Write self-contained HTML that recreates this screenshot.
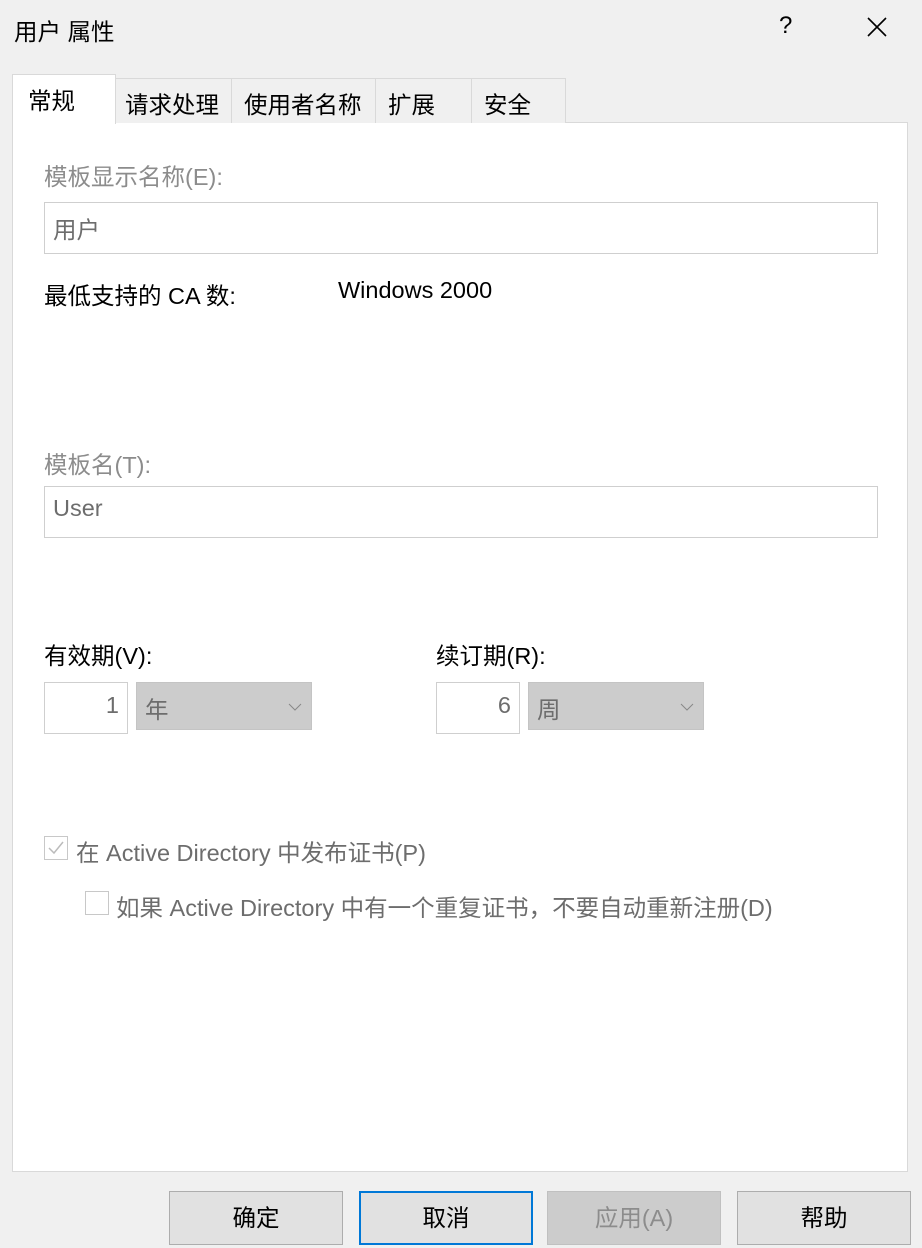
<!DOCTYPE html>
<html><head><meta charset="utf-8"><style>
*{margin:0;padding:0;box-sizing:border-box}
body{width:922px;height:1248px;background:#f0f0f0;font-family:"Liberation Sans","Noto Sans CJK SC",sans-serif;font-size:23.5px;color:#000;position:relative;overflow:hidden}
.a{position:absolute;white-space:nowrap}
.tab{position:absolute;top:78px;height:45px;border:1px solid #d9d9d9;border-bottom:none;background:#f0f0f0;padding:7px 0 0 9px}
.field{position:absolute;background:#fff;border:1px solid #cfcfcf;color:#6d6d6d;padding:6px 8px}
.combo{position:absolute;background:#cccccc;border:1px solid #c4c4c4;color:#6d6d6d;padding:8px 8px}
.gray{color:#8c8c8c}
.btn{position:absolute;top:1191px;width:174px;height:54px;background:#e1e1e1;border:1px solid #adadad;text-align:center;line-height:52px}
.chk{position:absolute;width:24px;height:24px;border:1px solid #c8c8c8;background:#fff}
</style></head><body>
<div class="a" style="left:14px;top:13px">用户 属性</div>
<div class="a" style="left:779px;top:12px;font-size:24px">?</div>
<svg class="a" style="left:866px;top:16px" width="22" height="22"><path d="M2 2L20 20M20 2L2 20" stroke="#000" stroke-width="1.6"/></svg>
<div class="a" style="left:12px;top:122px;width:896px;height:1050px;background:#fff;border:1px solid #d9d9d9"></div>
<div class="tab" style="left:115px;width:117px">请求处理</div>
<div class="tab" style="left:231px;width:145px;padding-left:12px">使用者名称</div>
<div class="tab" style="left:375px;width:97px;padding-left:12px">扩展</div>
<div class="tab" style="left:471px;width:95px;padding-left:12px">安全</div>
<div class="a" style="left:12px;top:74px;width:104px;height:50px;background:#fff;border:1px solid #d9d9d9;border-bottom:none;padding:7px 0 0 15px">常规</div>
<div class="a gray" style="left:44px;top:158px">模板显示名称(E):</div>
<div class="field" style="left:44px;top:202px;width:834px;height:52px;padding-top:8px">用户</div>
<div class="a" style="left:44px;top:277px">最低支持的 CA 数:</div>
<div class="a" style="left:338px;top:277px">Windows 2000</div>
<div class="a gray" style="left:44px;top:446px">模板名(T):</div>
<div class="field" style="left:44px;top:486px;width:834px;height:52px;padding-top:8px">User</div>
<div class="a" style="left:44px;top:637px">有效期(V):</div>
<div class="a" style="left:436px;top:637px">续订期(R):</div>
<div class="field" style="left:44px;top:682px;width:84px;height:52px;text-align:right;padding-top:9px">1</div>
<div class="combo" style="left:136px;top:682px;width:176px;height:48px">年</div>
<svg class="a" style="left:288px;top:702px" width="14" height="10"><path d="M1 2L7 8L13 2" stroke="#888" fill="none"/></svg>
<div class="field" style="left:436px;top:682px;width:84px;height:52px;text-align:right;padding-top:9px">6</div>
<div class="combo" style="left:528px;top:682px;width:176px;height:48px">周</div>
<svg class="a" style="left:680px;top:702px" width="14" height="10"><path d="M1 2L7 8L13 2" stroke="#888" fill="none"/></svg>
<div class="chk" style="left:44px;top:836px"></div>
<svg class="a" style="left:44px;top:836px" width="24" height="24"><path d="M5 12L10 17L19 6" stroke="#bbb" stroke-width="1.5" fill="none"/></svg>
<div class="a" style="left:76px;top:834px;color:#6d6d6d">在 Active Directory 中发布证书(P)</div>
<div class="chk" style="left:85px;top:891px"></div>
<div class="a" style="left:116px;top:889px;color:#6d6d6d">如果 Active Directory 中有一个重复证书，不要自动重新注册(D)</div>
<div class="btn" style="left:169px">确定</div>
<div class="btn" style="left:359px;border:2px solid #0078d7;line-height:50px">取消</div>
<div class="btn" style="left:547px;background:#cccccc;border-color:#c0c0c0;color:#8c8c8c">应用(A)</div>
<div class="btn" style="left:737px">帮助</div>
</body></html>
